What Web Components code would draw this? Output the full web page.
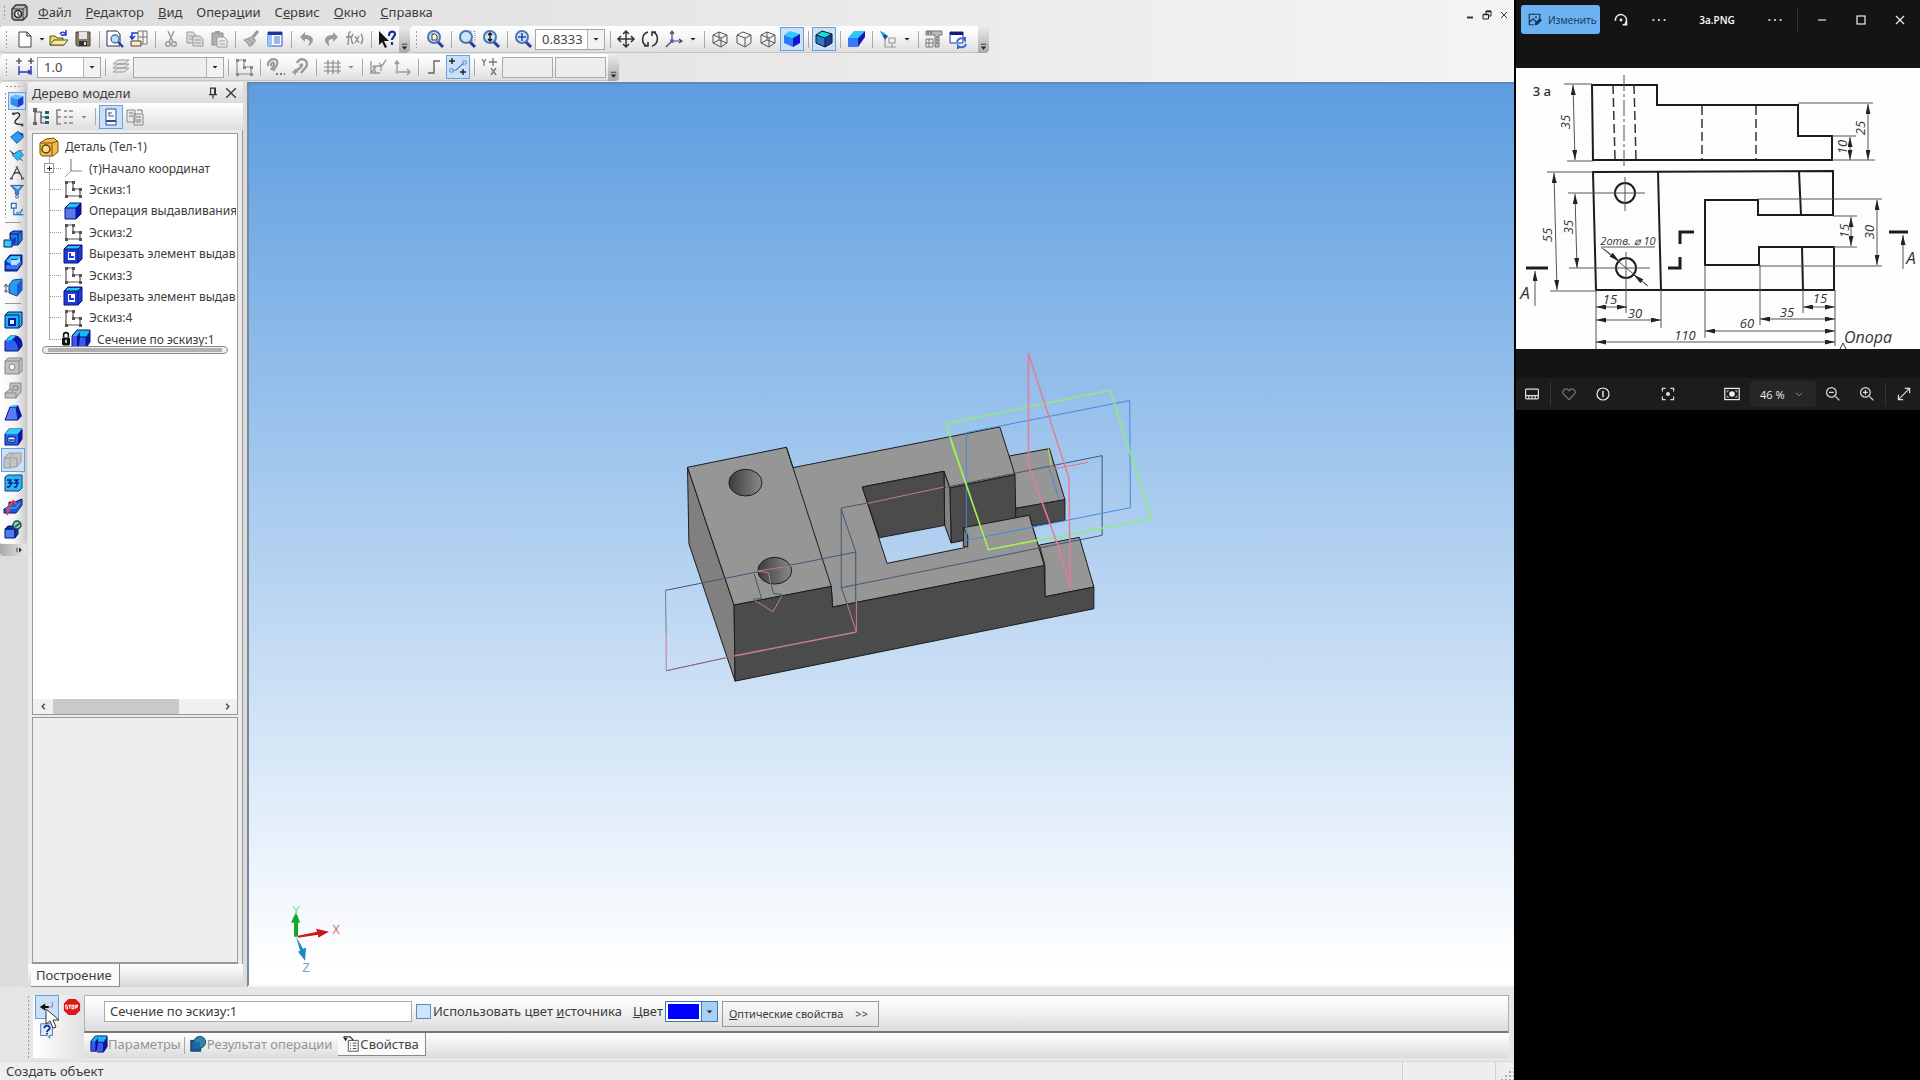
<!DOCTYPE html>
<html lang="ru">
<head>
<meta charset="utf-8">
<title>Деталь</title>
<style>
    html, body{
        height: 100%;
        margin: 0;
    }

    body{
        background: #000;
        font-family: "Noto Sans", "Open Sans", sans-serif;
        font-size: 13px;
        color: #3c3c3c;
        overflow: hidden;
    }
</style>
</head>
<body>

<desk-top>
    <cad-window slot="main"></cad-window>
    <photo-viewer slot="side"></photo-viewer>
</desk-top>

<script>
// every icon is drawn on a 20x20 grid
const cube = (f, t, s) => `<path d="M2 7h11v11H2z" fill="${f}"/><path d="M2 7l5-5h11l-5 5z" fill="${t}"/><path d="M13 7l5-5v11l-5 5z" fill="${s}"/><path d="M2 7l5-5h11v11l-5 5H2zM2 7h11v11M13 7l5-5" fill="none" stroke="#0a1470"/>`;
const wire = extra => `<path d="M3 6l6-3 8 3v8l-6 4-8-4zM3 6l8 3 6-3M11 9v9${extra}" fill="none" stroke="#555"/>`;
const lens = inner => `<path d="M12 12l6 6" stroke="#2a3c9c" stroke-width="3"/><circle cx="9" cy="8" r="6" fill="#cfe6fa" stroke="#4a74b8" stroke-width="2"/>${inner}`;
const sketch = c => `<path d="M3 3h7v7h7v7H3z" fill="none" stroke="${c}" stroke-width="1.2"/><path d="M2 2h3v3H2zM9 2h3v3H9zM9 9h3v3H9zM16 9h3v3h-3zM16 16h3v3h-3zM2 16h3v3H2z" fill="${c}"/>`;

const ICONS = {
    logo: `<path d="M3 7l4-4h9l2 2v9l-4 4H5l-2-2z" fill="#bbb" stroke="#333" stroke-width="1.4"/><path d="M3 7h11v11M14 7l4-3" fill="none" stroke="#333"/><circle cx="9" cy="12" r="3.5" fill="#eee" stroke="#222" stroke-width="1.6"/><path d="M9 10v3h2" fill="none" stroke="#222"/>`,
    doc: `<path d="M4 3h8l4 4v11H4z" fill="#fff" stroke="#444"/><path d="M12 3v4h4" fill="none" stroke="#222"/>`,
    open: `<path d="M1 16V7h5l2 2h6v7z" fill="#e8d860" stroke="#555522"/><path d="M1 16l4-5h14l-4 5z" fill="#f4ee9c" stroke="#555522"/><path d="M11 5c2-3 4-2 6 0M17 1v5h-5" fill="none" stroke="#1a2ad0" stroke-width="1.4"/>`,
    save: `<path d="M3 3h14v14H4l-1-1z" fill="#8a7a60" stroke="#444"/><path d="M6 3h8v7H6z" fill="#e4e4e4"/><path d="M6 12h8v5H6z" fill="#333"/><path d="M11 13h2v3h-2z" fill="#ddd"/>`,
    preview: `<path d="M2 2h10l3 3v12H2z" fill="#fff" stroke="#333"/><path d="M12 12l6 6" stroke="#2a3c9c" stroke-width="2.4"/><circle cx="10" cy="10" r="4" fill="#b8e0f8" stroke="#4474b8" stroke-width="1.4"/>`,
    manager: `<path d="M9 2h9v13H9z" fill="#f4f4f4" stroke="#777"/><path d="M9 8h9M14 2v13" stroke="#777"/><path d="M2 12h10v5H2z" fill="#ffe6c4" stroke="#444"/><path d="M9 4H3v5M1 7l2 3 3-3" fill="none" stroke="#2436d8" stroke-width="1.6"/>`,
    cut: `<path d="M7 2l5 11M13 2L8 13" stroke="#999" stroke-width="1.4"/><circle cx="7" cy="15" r="2.3" fill="none" stroke="#999" stroke-width="1.4"/><circle cx="13" cy="15" r="2.3" fill="none" stroke="#999" stroke-width="1.4"/>`,
    copy: `<path d="M2 3h6l3 3v8H2z" fill="#ddd" stroke="#999"/><path d="M8 7h7l3 3v7H8z" fill="#ddd" stroke="#999"/><path d="M4 7h4M4 10h4M10 11h6M10 14h6" stroke="#999"/>`,
    paste: `<path d="M3 4h11v12H3z" fill="#b0b0b0" stroke="#8a8a8a"/><path d="M6 2h5v3H6z" fill="#999"/><path d="M8 8h7l3 3v7H8z" fill="#eee" stroke="#999"/><path d="M10 12h6M10 15h6" stroke="#999"/>`,
    brush: `<path d="M17 2l-5 6" stroke="#999" stroke-width="3"/><path d="M2 11l9-4 4 4c-2 5-4 6-7 7-1-3-3-5-6-7z" fill="#a4a4a4"/><path d="M6 11l4 4M9 9l4 4" stroke="#ddd"/>`,
    props: `<path d="M3 3h14v14H3z" fill="#fff" stroke="#2b55b8"/><path d="M3 3h14v3H3z" fill="#1736a0"/><path d="M3 6h4v11H3z" fill="#9cc4f4"/><path d="M9 8h6M9 10h6M9 12h6M9 14h6" stroke="#3c6ad0"/>`,
    undo: `<path d="M8 3L3 8l5 5v-3c4 0 6 2 3 7 7-3 7-11-3-11z" fill="#9a9a9a"/>`,
    redo: `<path d="M12 3l5 5-5 5v-3c-4 0-6 2-3 7-7-3-7-11 3-11z" fill="#9a9a9a"/>`,
    fx: `<path d="M6 3c-3-1-2 3-3 13M1 8h5M8 5c-2 3-2 7 0 10M10 7l4 7M14 7l-4 7M16 5c2 3 2 7 0 10" fill="none" stroke="#8c8c8c" stroke-width="1.4"/>`,
    help: `<path d="M2 2v14l3-3 3 6 2-1-3-6h5z" fill="#111"/><path d="M12 7c0-6 6-5 6-2 0 3-3 3-3 6M15 13v3" fill="none" stroke="#20289c" stroke-width="2.2"/>`,
    zoomdoc: lens(`<path d="M7 5h3l2 2v4H7z" fill="#fff" stroke="#333"/>`),
    zoomarea: `<path d="M8 2h10v10H8z" fill="none" stroke="#888" stroke-dasharray="1 1"/>` + lens(''),
    zoomfit: lens(`<path d="M9 4v8M7 6l2-2 2 2M7 10l2 2 2-2" fill="none" stroke="#111" stroke-width="1.3"/>`),
    zoomin: lens(`<path d="M9 4v8M5 8h8" stroke="#2c4ca0" stroke-width="1.6"/>`),
    pan: `<path d="M10 2v16M2 10h16M7 5l3-3 3 3M7 15l3 3 3-3M5 7l-3 3 3 3M15 7l3 3-3 3" fill="none" stroke="#333" stroke-width="1.5"/>`,
    orbit: `<path d="M8 3c-7 2-7 12-1 14M12 17c7-2 7-12 1-14M4 17h4v-4M16 3h-4v4" fill="none" stroke="#333" stroke-width="1.6"/>`,
    axes: `<path d="M8 12V2M8 12h10M8 12l-6 6M6 5l2-3 2 3M15 10l3 2-3 2" fill="none" stroke="#445" stroke-width="1.2"/><circle cx="8" cy="12" r="2" fill="#5060d0"/>`,
    wire1: wire('M9 3v8M3 14l6-3 8 3'),
    wire2: wire(''),
    wire3: wire('M9 3v8M9 11l8 3M9 11l-6 3'),
    shaded: `<path d="M2 6l9 3v9l-9-4z" fill="#2c7cf4"/><path d="M2 6l6-4 10 3-7 4z" fill="#26ccfa"/><path d="M11 9l7-4v9l-7 4z" fill="#1414d0"/>`,
    shadededge: `<path d="M2 6l9 3v9l-9-4z" fill="#2c7cc4"/><path d="M2 6l6-4 10 3-7 4z" fill="#16dcd8"/><path d="M11 9l7-4v9l-7 4z" fill="#1c3ca0"/><path d="M2 6l6-4 10 3v9l-7 4-9-4zM2 6l9 3 7-4M11 9v9" fill="none" stroke="#112"/>`,
    persp: `<path d="M2 9h10v9H2z" fill="#3c78f4"/><path d="M2 9l6-7h11l-7 7z" fill="#28c8fa"/><path d="M12 9l7-7v6l-7 10z" fill="#1818b4"/>`,
    orient: `<path d="M2 2l8 5-3 4z" fill="#1c4ea0"/><path d="M2 2l5 2-2 3z" fill="#28b0e0"/><path d="M7 10v8h5M11 9h6v5h-6zM14 14v4M11 18h7" fill="none" stroke="#999" stroke-width="1.2"/>`,
    caliper: `<path d="M2 2h16v4h-3v12h-4V6H2z" fill="#bbb" stroke="#777"/><path d="M2 10h7v8H2zM2 14h7M5 10v8" fill="#eee" stroke="#777"/><path d="M4 2v3M7 2v3M12 8h2M12 11h2M12 14h2" stroke="#555"/>`,
    rebuild: `<path d="M2 3h13v11H2z" fill="#fff" stroke="#223388"/><path d="M2 3h13v3H2z" fill="#161a80"/><path d="M9 13c1-4 6-5 8-2v-3M18 15c-1 4-6 4-8 2v3" fill="none" stroke="#3468e4" stroke-width="2"/>`,
    dimstep: `<path d="M4 1v6M1 4h6M16 1v6M13 4h6" stroke="#333" stroke-width="1.2"/><path d="M4 9v9M16 9v9M4 15h12M13 13l3 2-3 2" fill="none" stroke="#2838c0" stroke-width="1.4"/>`,
    layers: `<path d="M2 15l5-4h11l-5 4zM2 11l5-4h11l-5 4zM2 7l5-4h11l-5 4z" fill="#e6e6e6" stroke="#999"/>`,
    sketchgrey: sketch('#8a8a8a'),
    sketch: sketch('#5a5252'),
    magnet1: `<path d="M2 9C1 0 14 0 11 8l-4 6M5 9c0-5 4-4 3-1l-3 5" fill="none" stroke="#999" stroke-width="2.2"/><path d="M10 17h2M14 17h2M18 17h1" stroke="#777" stroke-width="2"/>`,
    magnet2: `<path d="M7 6c3-7 13-3 9 4l-5 6M10 9c2-3 3-1 1 1l-5 4" fill="none" stroke="#999" stroke-width="2.4"/><path d="M5 12v6M2 15h6" stroke="#777"/>`,
    grid: `<path d="M6 3v14M11 3v14M16 3v14M2 6h17M2 10h17M2 14h17" stroke="#888" stroke-width="1.2"/>`,
    lcs1: `<path d="M3 4v12h9M5 9l3 7M5 9h8v5M11 6l3 3 4-6M3 16l5-6" fill="none" stroke="#999" stroke-width="1.4"/>`,
    lcs2: `<path d="M5 15V4M5 15h13M3 7l2-3 2 3M15 12l3 3-3 3" fill="none" stroke="#999" stroke-width="1.4"/><circle cx="5" cy="15" r="2" fill="#bbb"/>`,
    ortho: `<path d="M4 16h6V4h6" fill="none" stroke="#666" stroke-width="1.4"/>`,
    round: `<path d="M4 1v6M1 4h6M15 12v6M12 15h6" stroke="#222" stroke-width="1.4"/><path d="M3 14l5-1 8-7" fill="none" stroke="#4a86c8" stroke-width="1.2"/><path d="M2 12h3v3H2zM15 4h3v3h-3z" fill="#fff" stroke="#4a86c8"/>`,
    xy: `<path d="M2 2l2 3 2-3M4 5v4M13 1v8M9 5h8M11 11l5 7M16 11l-5 7" fill="none" stroke="#777" stroke-width="1.3"/>`,
    curve: `<path d="M6 4c7-4 10 1 4 6s-1 7 6 7" fill="none" stroke="#222" stroke-width="1.6"/><path d="M4 2h3v3H4zM15 16h3v3h-3z" fill="#444"/>`,
    surf: `<path d="M2 10l9-7 7 7-8 8z" fill="#2c9cf0" stroke="#123c9c"/><path d="M11 3l7 7V6z" fill="#1438b8"/>`,
    surf2: `<path d="M1 4l4 5 12 8M17 4L5 9" stroke="#333"/><path d="M4 10l9-6 5 6-7 7z" fill="#2cbcf4" stroke="#1a58b0"/>`,
    compass: `<path d="M10 3L3 17M10 3l7 14M5 12c3-3 7-3 10 0" fill="none" stroke="#333" stroke-width="1.3"/><circle cx="10" cy="3" r="1.6" fill="#777"/><path d="M1 16h4v2H1zM15 16h4v2h-4z" fill="#555"/>`,
    filter: `<path d="M2 3h16l-6 7v4H8v-4z" fill="#3c88dc" stroke="#1c4a94"/><path d="M5 4h10l-4 4z" fill="#a8d8fa"/><circle cx="10" cy="17" r="1.800" fill="none" stroke="#1c4a94"/>`,
    spec: `<path d="M3 3h6v6H3zM6 9v8h12M9 14l4 3 4-7" fill="none" stroke="#2c6cb8" stroke-width="1.5"/><path d="M10 16l3-4 2 4z" fill="#54c0f0"/>`,
    partcube: `<path d="M2 5l9 3v10l-9-4z" fill="#3488f4"/><path d="M2 5l6-3 10 2-7 4z" fill="#58c0fa"/><path d="M11 8l7-4v10l-7 4z" fill="#1c40c8"/>`,
    extrude: cube('#5878f0', '#18c8f8', '#0c14c0'),
    cutbox: `<path d="M1 5l4-4h14v14l-4 4H1z" fill="#1c3cd8" stroke="#0a1470"/><path d="M2 5l3-3h13l-3 3z" fill="#28c4f8"/><path d="M1 5h14v14M15 5l4-4" fill="none" stroke="#0a1470"/><path d="M5 8h7v8H5z" fill="#fff"/><path d="M6 14V9h2v3h3v2z" fill="#1c3cd8"/>`,
    section: `<path d="M1 6l5-5h13v12l-5 6H9V8H1z" fill="#18b8f4"/><path d="M1 7h6v11H1zM8 8h7v11H8z" fill="#3858f0"/><path d="M15 8l4-6v11l-4 6zM6 7l3-4v5l-1 9-2 1z" fill="#0c14a8"/><path d="M1 7l5-6h13v12l-4 6H8M1 7v11h7M7 7v10M8 8h7v11" fill="none" stroke="#0a1470"/>`,
    part: `<path d="M1 6l6-4 8-1 4 4v10l-5 4H3l-2-2z" fill="#f4bc48" stroke="#7a5010"/><path d="M1 6h12v13M13 6l6-2" fill="none" stroke="#7a5010"/><circle cx="7" cy="12" r="4" fill="#fadc8c" stroke="#5c3c0c" stroke-width="1.4"/>`,
    origin: `<path d="M8 1v12h11" fill="none" stroke="#8a8494" stroke-width="1.2"/><path d="M8 13l-6 6" stroke="#c89090"/>`,
    lock: `<path d="M7 8V5c0-4 6-4 6 0v3" fill="none" stroke="#111" stroke-width="2"/><rect x="5" y="8" width="10" height="10" rx="2" fill="#111"/><path d="M10 11v4" stroke="#eee" stroke-width="2"/>`,
    b1: `<path d="M7 4l3-2h9v9l-4 5h-5v-6H7z" fill="#1c7ce4" stroke="#0a1470"/><path d="M7 5h8v10M15 5l4-3" fill="none" stroke="#0a1470"/><path d="M1 11h8v7H1z" fill="#3cc8f4" stroke="#0a1470"/><path d="M9 11l4-3v5l-4 5z" fill="#1838c0"/>`,
    b2: `<path d="M2 8l5-6h12v9l-5 7H2z" fill="#1438c8" stroke="#0a1470"/><path d="M3 8l5-5h10l-3 3H8v5z" fill="#30c0f8"/><path d="M8 7h6l3-3v5l-3 3H8z" fill="#b8e0fa"/><path d="M8 12h6l4-4v3l-4 5H3v-4z" fill="#2c78ec"/>`,
    b3: `<path d="M6 8l4-5 9-1v11l-5 6-8-3z" fill="#2898f0" stroke="#184890"/><path d="M14 8l5-6v11l-5 6z" fill="#1c5cd0"/><path d="M3 7v9M1 10l2-3 2 3M1 14h4" fill="none" stroke="#555"/>`,
    b4: `<path d="M2 5l3-3h14v13l-3 3H2z" fill="#18b8f4" stroke="#0a1470"/><path d="M2 5h14v13" fill="none" stroke="#0a1470"/><path d="M6 9h6v6H6z" fill="#dff4ff" stroke="#0c18a8" stroke-width="2"/>`,
    b5: `<path d="M2 18V8l5-5h6c4 1 6 4 6 10l-4 5z" fill="#2c64ec" stroke="#0a1470"/><path d="M2 8l5-5h6l-4 4z" fill="#30c8f8"/><path d="M9 7c4 1 6 5 6 11l4-5C19 7 17 4 13 3z" fill="#0c18a8"/>`,
    b6: `<path d="M2 5l3-3h14v13l-3 3H2z" fill="#c0c0c0" stroke="#888"/><path d="M2 5h14v13M16 5l3-3" fill="none" stroke="#888"/><circle cx="9" cy="11" r="3" fill="#f4f4f4" stroke="#888"/>`,
    b7: `<path d="M2 13l5-4V3h11v9l-5 6H2z" fill="#c0c0c0" stroke="#888"/><path d="M2 13h11v5M7 9l3 3M10 6h5v4h-5z" fill="none" stroke="#888"/>`,
    b8: `<path d="M2 17L7 4h6l2 13z" fill="#5480f4" stroke="#0a1470"/><path d="M7 4l3-2h5l-2 2z" fill="#30c8f8"/><path d="M13 4l2-2 4 11-4 4z" fill="#0c18a8"/>`,
    b9: `<path d="M2 7l4-5h13v10l-4 6H2z" fill="#2468ec" stroke="#0a1470"/><path d="M2 7l4-5h13l-4 5z" fill="#30d0f8"/><path d="M15 7l4-5v10l-4 6z" fill="#0c18a8"/><path d="M5 10h7v5H5z" fill="#fff" stroke="#0a1470"/><path d="M6 13h5" stroke="#2468ec" stroke-width="2"/>`,
    b10: `<path d="M1 8l5-5h12v9l-5 5H8v1H1z" fill="#c4c4c4" stroke="#999"/><path d="M1 8h6v10M9 8h5v9M7 8l3-4" fill="none" stroke="#999"/>`,
    b11: `<path d="M2 4l3-2h14v13l-3 3H2z" fill="#28b8f0" stroke="#0c3c90"/><path d="M4 7h4l-2 3h3l-3 4H4M11 7h4l-3 3h3l-2 4h-2" fill="none" stroke="#0c1890" stroke-width="1.4"/>`,
    b12: `<path d="M1 12l5-3V5h6l7-3v6l-6 8H1z" fill="#1c58e0" stroke="#0a1470"/><path d="M2 11h11l4-5" fill="none" stroke="#40c8f8"/><path d="M4 14l6-10M10 3l4 5M4 18l4-12" stroke="#f04444" stroke-width="1.800"/>`,
    b13: `<path d="M2 9h10v9H2z" fill="#4480f4" stroke="#0a1470"/><path d="M2 9l3-3h10v8l-3 4V9z" fill="#1830b8" stroke="#0a1470"/><circle cx="14" cy="5" r="4" fill="#8cc8b8" stroke="#1c4c48" stroke-width="1.4"/><path d="M12 7l5-4" stroke="#1c4c48" stroke-width="1.4"/>`,
    tree: `<path d="M4 2v15M4 5h7M10 5v11h5M10 10h5" fill="none" stroke="#445" stroke-width="1.2"/><path d="M2 1h4v4H2zM2 15h4v3H2z" fill="#666"/><path d="M14 4h4v3h-4zM14 9h4v3h-4zM14 14h4v3h-4z" fill="#1c6474"/>`,
    treelist: `<path d="M6 3H2v14h4M2 10h4M9 4h3M14 4h4M9 10h3M14 10h4M9 16h3M14 16h4" fill="none" stroke="#888" stroke-width="1.6"/>`,
    treepage: `<path d="M5 2h10v16H5z" fill="#f8fcff" stroke="#334c90"/><path d="M5 14h10" stroke="#334c90" stroke-width="2"/><path d="M8 5v4h5M8 6h3" fill="none" stroke="#557"/>`,
    treedoc: `<path d="M2 3h8v12H2zM9 7h9v11H9z" fill="#e8e8e8" stroke="#888"/><path d="M4 6h4M4 9h4M11 10h5M11 13h5M11 15h5M12 3h5v3" fill="none" stroke="#777"/>`,
    enter: `<path d="M2 10l6-4v3h4v2H8v3z" fill="#111"/><path d="M12 10h4V4" fill="none" stroke="#789"/>`,
    stop: `<path d="M6 1h8l5 5v8l-5 5H6l-5-5V6z" fill="#dc1818"/><path d="M5 8H3v2h2v2H3M6 8h3M7.500 8v4M10 8h2v4h-2zM14 12V8h2v2h-2" fill="none" stroke="#fff" stroke-width="1.200"/>`,
    hint: `<path d="M3 2h13v13h-3v3l-3-3H3z" fill="#d8ecfc" stroke="#4468b0"/><path d="M7 7c0-4 6-4 6 0 0 2-3 2-3 4M10 12v2" fill="none" stroke="#1c2c90" stroke-width="2"/>`,
    body: `<path d="M2 6h11v12H2z" fill="#185c98" stroke="#0c3058"/><circle cx="12" cy="8" r="6.500" fill="#3484b0" stroke="#184868"/><path d="M5 8h7v7H5z" fill="#1868a8"/>`,
    form: `<path d="M2 2h7l3 3v4" fill="none" stroke="#334" stroke-width="1.400"/><path d="M1 2l3 5 2-3z" fill="#223"/><path d="M7 6h11v12H7z" fill="#fff" stroke="#444"/><path d="M9 9h1M12 9h4M9 12h1M12 12h4M9 15h1M12 15h4" stroke="#333"/>`,
    pin: `<path d="M7 4h6v8H7zM5 12h10M10 12v5M12 4v8" fill="none" stroke="#333" stroke-width="1.500"/>`,
    close: `<path d="M4 4l12 12M16 4L4 16" stroke="currentColor" stroke-width="1.800"/>`,
    min: `<path d="M4 15h12" stroke="#333" stroke-width="4"/>`,
    restore: `<path d="M2 9h11v9H2zM8 8V2h10v10h-4" fill="none" stroke="#222" stroke-width="2"/><path d="M2 9h11M8 3h10" stroke="#222" stroke-width="3"/>`,
    left: `<path d="M13 4l-6 6 6 6" fill="none" stroke="#444" stroke-width="3"/>`,
    right: `<path d="M7 4l6 6-6 6" fill="none" stroke="#444" stroke-width="3"/>`,
    flyout: `<path d="M5 4v12" stroke="#222" stroke-width="2"/><path d="M10 4l7 6-7 6z" fill="#222"/>`,
    edit: `<path d="M17 9V3H3v14h6M3 14l5-5 4 4" fill="none" stroke="#173250" stroke-width="1.500"/><path d="M10 18l1-4 6-6 3 3-6 6z" fill="#173250"/><circle cx="12" cy="7" r="1.300" fill="#173250"/>`,
    rotate: `<path d="M3 11a7 7 0 1 1 12 4M17 11v5h-5" fill="none" stroke="#eee" stroke-width="1.800"/><circle cx="10" cy="10" r="1.800" fill="#eee"/>`,
    dots: `<circle cx="3" cy="10" r="1.400" fill="#ddd"/><circle cx="10" cy="10" r="1.400" fill="#ddd"/><circle cx="17" cy="10" r="1.400" fill="#ddd"/>`,
    wmin: `<path d="M5 10h10" stroke="#ddd" stroke-width="1.500"/>`,
    wmax: `<rect x="5" y="5" width="10" height="10" fill="none" stroke="#eee" stroke-width="1.500"/>`,
    wclose: `<path d="M5 5l10 10M15 5L5 15" stroke="#eee" stroke-width="1.500"/>`,
    film: `<rect x="2" y="4" width="16" height="12" rx="1" fill="none" stroke="#ddd" stroke-width="1.500"/><path d="M2 12h16M6 12v4M10 12v4M14 12v4" stroke="#ddd" stroke-width="1.500"/>`,
    heart: `<path d="M10 17L3 10c-3-5 4-9 7-4 3-5 10-1 7 4z" fill="none" stroke="#777" stroke-width="1.500"/>`,
    info: `<circle cx="10" cy="10" r="7.500" fill="none" stroke="#eee" stroke-width="1.500"/><path d="M10 6v8" stroke="#eee" stroke-width="1.800"/>`,
    scan: `<path d="M3 7V3h4M13 3h4v4M17 13v4h-4M7 17H3v-4" fill="none" stroke="#ddd" stroke-width="1.500"/><circle cx="10" cy="10" r="2.500" fill="#ddd"/>`,
    fit: `<rect x="1" y="3" width="18" height="14" fill="none" stroke="#eee" stroke-width="1.500"/><circle cx="10" cy="10" r="3.500" fill="#eee"/><path d="M4 8V6h2M14 6h2v2M16 12v2h-2M6 14H4v-2" fill="none" stroke="#eee"/>`,
    chevron: `<path d="M5 8l5 5 5-5" fill="none" stroke="#999" stroke-width="1.500"/>`,
    minus: `<circle cx="8" cy="8" r="6" fill="none" stroke="#ddd" stroke-width="1.500"/><path d="M5 8h6M13 13l5 5" stroke="#ddd" stroke-width="1.500"/>`,
    plus: `<circle cx="8" cy="8" r="6" fill="none" stroke="#ddd" stroke-width="1.500"/><path d="M5 8h6M8 5v6M13 13l5 5" stroke="#ddd" stroke-width="1.500"/>`,
    expand: `<path d="M3 17L17 3M11 3h6v6M3 11v6h6" fill="none" stroke="#ddd" stroke-width="1.500"/>`,
    drop: `<path d="M5 8h10l-5 5z" fill="#222"/>`,
    dropgrey: `<path d="M5 8h10l-5 5z" fill="#888"/>`,
    more: `<path d="M4 5h12" stroke="#333" stroke-width="2"/><path d="M4 10h12l-6 7z" fill="#222"/>`
};

// registers an element whose shadow root is cloned from one template
function define(name, html, setup){
    const template = document.createElement('template');
    template.innerHTML = html;
    customElements.define(name, class extends HTMLElement{
        constructor(){
            super();
            this.attachShadow({mode: 'open'});
            this.shadowRoot.appendChild(template.content.cloneNode(true));
        }
        connectedCallback(){
            if(setup) setup(this, this.shadowRoot);
        }
    });
}

define('ui-icon', `
    <style>
    :host{
        display: inline-block;
        flex: none;
        width: var(--icon, 20px);
        height: var(--icon, 20px);
    }
    svg{
        display: block;
        width: 100%;
        height: 100%;
    }
    </style>
    <svg viewBox="0 0 20 20" aria-hidden="true"></svg>
`, (host, root) => {
    root.querySelector('svg').innerHTML = ICONS[host.getAttribute('name')];
});

define('tool-button', `
    <style>
    :host{
        display: flex;
        flex: none;
        width: 24px;
        height: 24px;
    }
    :host([size="narrow"]){ width: 10px; --icon: 10px; }
    :host([size="wide"]){ width: 14px; --icon: 10px; }
    :host([size="small"]){ width: 18px; height: 18px; --icon: 16px; }
    button{
        display: flex;
        align-items: center;
        justify-content: center;
        flex: 1;
        min-width: 0;
        padding: 0;
        border: 1px solid transparent;
        background: none;
        color: inherit;
    }
    :host([pressed]) button{
        background: #c9e0f7;
        border-color: #6c9fd8;
    }
    </style>
    <button type="button"></button>
`, (host, root) => {
    const button = root.querySelector('button');
    const icon = host.getAttribute('icon');
    button.innerHTML = `<ui-icon name="${icon}"></ui-icon>`;
    button.setAttribute('aria-label', host.getAttribute('label') || icon);
});

define('tool-sep', `
    <style>
    :host{
        display: flex;
        flex: none;
        width: 8px;
        height: 17px;
        justify-content: center;
    }
    i{ border-left: 1px solid #a8a8a8; }
    </style>
    <i></i>
`);

define('tool-combo', `
    <style>
    :host{
        display: flex;
        flex: none;
        box-sizing: border-box;
        height: 21px;
        border: 1px solid #a6a6a6;
        background: #fff;
    }
    :host([off]){ background: #eee; }
    select{
        appearance: none;
        flex: 1;
        min-width: 0;
        border: 0;
        margin: 0;
        padding: 0 0 0 6px;
        background: none;
        font: inherit;
        color: #444;
        opacity: 1;
    }
    span{
        display: flex;
        align-items: center;
        border-left: 1px solid #b4b4b4;
        background: #f2f2f2;
        padding: 0 3px;
        --icon: 10px;
    }
    </style>
    <select><option></option></select><span><ui-icon name="drop"></ui-icon></span>
`, (host, root) => {
    const select = root.querySelector('select');
    select.options[0].textContent = host.getAttribute('value') || '';
    select.setAttribute('aria-label', host.getAttribute('label'));
    select.disabled = host.hasAttribute('off');
});

define('tool-bar', `
    <style>
    :host{
        display: flex;
        flex: none;
        height: 27px;
    }
    .items{
        display: flex;
        align-items: center;
        padding-left: 5px;
        border-radius: 4px 0 0 4px;
        background: linear-gradient(#fff, #f6f6f6 40%, #dedede);
        border-bottom: 1px solid #c4c4c4;
    }
    .grip{
        width: 8px;
        height: 18px;
        background: radial-gradient(circle, #999 1px, transparent 1px) 0 0 / 3px 4px repeat-y;
    }
    .more{
        display: flex;
        align-items: flex-end;
        width: 11px;
        padding: 0 0 2px 1px;
        border: 0;
        border-radius: 0 4px 4px 0;
        background: linear-gradient(#ececec, #a8a8a8);
        --icon: 9px;
    }
    </style>
    <div class="items"><span class="grip"></span><slot></slot></div>
    <button class="more" type="button" aria-label="Настройка панели"><ui-icon name="more"></ui-icon></button>
`);

define('menu-bar', `
    <style>
    :host{
        display: flex;
        flex: none;
        align-items: center;
        box-sizing: border-box;
        height: 26px;
        padding: 0 2px 2px 3px;
    }
    .grip{
        width: 6px;
        height: 14px;
        background: radial-gradient(circle, #999 1px, transparent 1px) 0 0 / 3px 4px repeat-y;
    }
    nav{
        display: flex;
        flex: 1;
        gap: 14px;
        padding-left: 9px;
    }
    nav button{
        padding: 0;
        border: 0;
        background: none;
        font: inherit;
        color: inherit;
    }
    .win{
        display: flex;
        padding-top: 6px;
        --icon: 10px;
        color: #222;
    }
    .win tool-button{ width: 17px; }
    </style>
    <span class="grip"></span><ui-icon name="logo"></ui-icon>
    <nav>
        <button type="button"><u>Ф</u>айл</button>
        <button type="button"><u>Р</u>едактор</button>
        <button type="button"><u>В</u>ид</button>
        <button type="button">Опера<u>ц</u>ии</button>
        <button type="button">С<u>е</u>рвис</button>
        <button type="button"><u>О</u>кно</button>
        <button type="button"><u>С</u>правка</button>
    </nav>
    <div class="win">
        <tool-button icon="min" label="Свернуть"></tool-button>
        <tool-button icon="restore" label="Восстановить"></tool-button>
        <tool-button icon="close" label="Закрыть"></tool-button>
    </div>
`);

define('side-bar', `
    <style>
    :host{
        display: flex;
        flex-direction: column;
        flex: none;
        width: 28px;
    }
    .strip{
        box-sizing: border-box;
        width: 27px;
        padding: 3px 0 2px;
        background: linear-gradient(90deg, #fff, #f4f4f4 55%, #c8c8c8);
        border-radius: 4px;
    }
    .top{
        height: 7px;
        margin: 0 5px;
        background: radial-gradient(circle, #999 1px, transparent 1px) 0 0 / 4px 3px repeat-x;
    }
    .modes{
        padding-left: 8px;
        background: radial-gradient(circle, #999 1px, transparent 1px) 4px 0 / 3px 4px repeat-y;
    }
    .group{
        display: grid;
        grid-auto-rows: 1fr;
        padding-left: 1px;
    }
    .group tool-button{
        height: auto;
        min-height: 0;
    }
    .a{ height: 72px; }
    .b{ height: 234px; }
    hr{
        width: 16px;
        margin: 4px 5px;
        border: 0;
        border-top: 1px solid #999;
    }
    .end{
        display: flex;
        align-items: center;
        justify-content: flex-end;
        width: 26px;
        height: 12px;
        padding: 0 3px;
        border: 0;
        border-radius: 0 0 4px 4px;
        background: linear-gradient(90deg, #a8a8a8, #e8e8e8);
        --icon: 8px;
    }
    </style>
    <div class="strip">
        <div class="top"></div>
        <div class="modes">
            <tool-button size="small" icon="partcube" pressed></tool-button>
            <tool-button size="small" icon="curve"></tool-button>
            <tool-button size="small" icon="surf"></tool-button>
            <tool-button size="small" icon="surf2"></tool-button>
            <tool-button size="small" icon="compass"></tool-button>
            <tool-button size="small" icon="filter"></tool-button>
            <tool-button size="small" icon="spec"></tool-button>
        </div>
        <hr>
        <div class="group a">
            <tool-button icon="b1"></tool-button>
            <tool-button icon="b2"></tool-button>
            <tool-button icon="b3"></tool-button>
        </div>
        <hr>
        <div class="group b">
            <tool-button icon="b4"></tool-button>
            <tool-button icon="b5"></tool-button>
            <tool-button icon="b6"></tool-button>
            <tool-button icon="b7"></tool-button>
            <tool-button icon="b8"></tool-button>
            <tool-button icon="b9"></tool-button>
            <tool-button icon="b10" pressed></tool-button>
            <tool-button icon="b11"></tool-button>
            <tool-button icon="b12"></tool-button>
            <tool-button icon="b13"></tool-button>
        </div>
    </div>
    <button class="end" type="button" aria-label="Развернуть панель"><ui-icon name="flyout"></ui-icon></button>
`);

define('tree-node', `
    <style>
    :host{
        display: flex;
        align-items: center;
        gap: 6px;
        padding-left: 10px;
        white-space: nowrap;
    }
    :host([root]){ padding-left: 0; }
    .line{
        flex: none;
        width: 12px;
        margin-right: -4px;
        border-top: 1px dotted #999;
    }
    :host([root]) .line{ display: none; }
    .text{
        flex: 1;
        min-width: 0;
        overflow: hidden;
    }
    </style>
    <span class="line"></span><slot name="mark"></slot><span class="text"><slot></slot></span>
`, (host, root) => {
    root.querySelector('.text').insertAdjacentHTML('beforebegin', `<ui-icon name="${host.getAttribute('icon')}"></ui-icon>`);
});

define('model-tree', `
    <style>
    :host{
        display: flex;
        flex-direction: column;
        flex: none;
        box-sizing: border-box;
        width: 219px;
        background: #eaeaea;
        border-right: 4px solid #dcdcdc;
        box-shadow: inset -1px 0 #999;
    }
    header{
        display: flex;
        align-items: center;
        flex: none;
        height: 21px;
        padding: 0 3px 0 4px;
        background: linear-gradient(#f2f2f2, #dcdcdc);
    }
    header span{ flex: 1; }
    .bar{
        display: flex;
        align-items: center;
        flex: none;
        height: 27px;
        padding-left: 1px;
        background: linear-gradient(#fff, #dedede);
    }
    .box{
        display: flex;
        flex-direction: column;
        flex: none;
        box-sizing: border-box;
        height: 582px;
        margin: 3px 5px 2px 4px;
        border: 1px solid #999;
        background: #fff;
    }
    .rows{
        display: grid;
        grid-template-columns: minmax(0, 1fr);
        grid-auto-rows: 1fr;
        flex: none;
        height: 214px;
        padding: 2px 1px 0 6px;
        font-size: 12px;
        background: linear-gradient(#aaa, #aaa) 16px 22px / 1px 184px no-repeat;
    }
    .plus{
        box-sizing: border-box;
        flex: none;
        width: 10px;
        height: 10px;
        margin: 0 3px 0 -19px;
        border: 1px solid #999;
        background: linear-gradient(#333, #333) center / 5px 1px no-repeat, linear-gradient(#333, #333) center / 1px 5px no-repeat, #fff;
    }
    .lock{
        margin: 0 -9px 0 -5px;
        --icon: 16px;
    }
    .stop{
        flex: none;
        height: 4px;
        margin: -3px 10px 0;
        border: 1px solid #eee;
        border-width: 1px 5px;
        outline: 1px solid #888;
        border-radius: 4px;
        background: #b0b0b0;
    }
    .scroll{
        display: flex;
        align-items: center;
        height: 15px;
        margin-top: auto;
        background: #f0f0f0;
        --icon: 9px;
    }
    .scroll button{
        display: flex;
        justify-content: center;
        width: 20px;
        padding: 0;
        border: 0;
        background: none;
    }
    .track{
        flex: 1;
        height: 15px;
    }
    .track i{
        display: block;
        width: 77%;
        height: 15px;
        background: #c9c9c9;
    }
    .info{
        flex: 1;
        margin: 0 5px 0 4px;
        border: 1px solid #999;
        border-bottom: 2px solid #999;
        background: #eee;
    }
    .tabs{
        flex: none;
        height: 23px;
        padding-left: 3px;
        background: linear-gradient(#fff, #d8d8d8);
    }
    .tabs button{
        height: 23px;
        padding: 0 7px 0 5px;
        border: solid #888;
        border-width: 0 1px 1px 0;
        background: #fafafa;
        font: inherit;
        color: inherit;
    }
    </style>
    <header><span>Дерево модели</span>
        <tool-button size="small" icon="pin" label="Закрепить"></tool-button>
        <tool-button size="small" icon="close" label="Закрыть"></tool-button>
    </header>
    <div class="bar">
        <tool-button icon="tree"></tool-button><tool-button icon="treelist"></tool-button>
        <tool-button size="wide" icon="dropgrey"></tool-button><tool-sep></tool-sep>
        <tool-button icon="treepage" pressed></tool-button><tool-button icon="treedoc"></tool-button>
    </div>
    <div class="box">
        <div class="rows">
            <tree-node root icon="part">Деталь (Тел-1)</tree-node>
            <tree-node icon="origin"><i class="plus" slot="mark"></i>(т)Начало координат</tree-node>
            <tree-node icon="sketch">Эскиз:1</tree-node>
            <tree-node icon="extrude">Операция выдавливания</tree-node>
            <tree-node icon="sketch">Эскиз:2</tree-node>
            <tree-node icon="cutbox">Вырезать элемент выдав.</tree-node>
            <tree-node icon="sketch">Эскиз:3</tree-node>
            <tree-node icon="cutbox">Вырезать элемент выдав.</tree-node>
            <tree-node icon="sketch">Эскиз:4</tree-node>
            <tree-node icon="section"><ui-icon class="lock" slot="mark" name="lock"></ui-icon>Сечение по эскизу:1</tree-node>
        </div>
        <div class="stop"></div>
        <div class="scroll">
            <button type="button" aria-label="Влево"><ui-icon name="left"></ui-icon></button>
            <div class="track"><i></i></div>
            <button type="button" aria-label="Вправо"><ui-icon name="right"></ui-icon></button>
        </div>
    </div>
    <div class="info"></div>
    <div class="tabs"><button type="button">Построение</button></div>
`);

define('model-view', `
    <style>
    :host{
        display: block;
        flex: 1;
        min-width: 0;
        border-top: 2px solid #6089b4;
        border-left: 2px solid #77899c;
        border-bottom: 2px solid #f4f4f4;
        background: linear-gradient(#5c9de0, #fff 98%);
    }
    .scene{
        display: block;
        width: 100%;
        height: 100%;
    }
    .model *{ vector-effect: non-scaling-stroke; }
    </style>
    <svg class="scene" viewBox="0 0 1264 900" fill="none">
        <defs>
            <linearGradient id="hole"><stop stop-color="#3c3c3c"/><stop offset="1" stop-color="#8a8a8a"/></linearGradient>
        </defs>
        <svg class="model" x="391" y="256" width="540" height="360" viewBox="0 0 1568 1080" preserveAspectRatio="none">
            <g stroke="#1c1c1c" stroke-width="1" stroke-linejoin="round">
                <path fill="#808080" d="M137 381L272 794L275 1022L141 610Z"/>
                <path fill="#969696" d="M1071 347L1187 325L1232 478L1089 504Z"/>
                <path fill="#4b4b4b" d="M1089 504L1232 478V540L1089 566Z"/>
                <path fill="#969696" fill-rule="evenodd" d="M137 381L424 321L443 382L1043 260L1087 403L898 443L881 393L644 440L716 669L950 620L938 562L1128 525L1172 675L558 800L554 738L272 794Z"/>
                <path fill="#4b4b4b" d="M898 443L1087 403L1089 504V566L940 600L902 608Z"/>
                <path fill="#828282" d="M881 393L898 443L902 608L883 555Z"/>
                <path fill="#4b4b4b" d="M644 440L881 393L883 555L694 592Z"/>
                <path fill="#969696" d="M938 562L1128 525L1172 675L950 720Z" stroke="none"/>
                <path d="M938 562L1128 525L1172 675"/>
                <path fill="#777" d="M938 562L950 585V620L937 618Z"/>
                <path fill="#969696" d="M1158 614L1274 591L1316 740L1174 769V675Z"/>
                <path fill="#4b4b4b" d="M272 794L554 738L558 800L1172 675L1174 769L1316 740V805L275 1022Z"/>
                <path d="M424 321L554 738"/>
                <ellipse cx="305" cy="427" rx="48" ry="40" fill="url(#hole)"/>
                <ellipse cx="390" cy="691" rx="49" ry="40" fill="url(#hole)"/>
            </g>
            <g stroke="#3f5872">
                <path d="M73 750L625 635V790M583 503L660 488M583 503V742L1340 585V346L885 441M583 507L625 635M583 742L602 795"/>
                <path d="M330 700L352 775L328 776M372 700L387 760L410 762V772"/>
            </g>
            <path stroke="#70808f" d="M73 750L75 880"/>
            <g stroke="#c47d8e">
                <path d="M75 880V991L275 946M600 790L627 875V780M340 692L440 676M660 489L881 440M332 780L385 814L410 768M340 692L372 697L378 730"/>
                <path d="M275 946L627 875" stroke-width="1.5"/>
                <path stroke="#8c6880" d="M75 991L275 946"/>
            </g>
            <path stroke="#428adf" d="M946 277L1420 181L1422 502L946 600ZM1187 385L1215 478"/>
            <path stroke="#8eed78" stroke-width="1.5" d="M886 250L1363 150L1484 535L1010 628Z"/>
            <path stroke="#a8f838" d="M900 300L1010 628L1155 598M1184 325L1192 378"/>
            <path stroke="#e57b96" stroke-width="1.5" d="M1126 40V375L1210 610L1247 740L1244 415Z"/>
            <path stroke="#ee7078" d="M1190 388L1300 366"/>
        </svg>
        <g>
            <path fill="#c81818" d="M49 851l19-4-1-3 13 3-11 6v-3l-20 3z"/>
            <path fill="#14a828" d="M45 852V838h-3l5-11 4 11h-2v14z"/>
            <path fill="#1c88c8" d="M47 852l7 12 3-1-1 13-7-9 2-1z"/>
        </g>
        <g font-family="Liberation Mono, monospace" font-size="13" text-anchor="middle">
            <text x="87" y="849" fill="#d87878">X</text>
            <text x="47" y="830" fill="#8cd89c">Y</text>
            <text x="57" y="887" fill="#78a0dc">Z</text>
        </g>
    </svg>
`);

define('property-panel', `
    <style>
    :host{
        display: flex;
        flex: none;
        padding: 8px 5px 3px 27px;
        background: #e6e6e6;
    }
    .grip{
        width: 6px;
        background: radial-gradient(circle, #999 1px, transparent 1px) 0 0 / 3px 4px repeat-y;
    }
    .acts{
        display: grid;
        grid-template-columns: 25px 23px;
        grid-auto-rows: 24px;
        position: relative;
        box-sizing: border-box;
        width: 51px;
        padding-left: 2px;
        background: linear-gradient(90deg, #fff, #e2e2e2);
        --icon: 18px;
    }
    /* mouse pointer, lies over the first button */
    .acts svg{
        position: absolute;
        left: 12px;
        top: 13px;
        width: 15px;
        height: 21px;
    }
    .main{
        flex: 1;
        min-width: 0;
    }
    .form{
        display: flex;
        align-items: center;
        box-sizing: border-box;
        height: 38px;
        padding: 0 0 4px 19px;
        border: 1px solid #b0b0b0;
        border-bottom: 2px solid #777;
        background: linear-gradient(#fff, #f4f4f4 40%, #dcdcdc);
    }
    .name{
        box-sizing: border-box;
        width: 308px;
        height: 21px;
        padding: 0 5px;
        border: 1px solid #aaa;
        font: inherit;
        color: inherit;
    }
    .check{
        appearance: none;
        width: 15px;
        height: 15px;
        margin: 0 2px 0 4px;
        border: 1px solid #5c8cc0;
        background: #cfe4f8;
    }
    .color{
        margin-left: 11px;
    }
    .pick{
        display: flex;
        align-items: center;
        width: 53px;
        height: 21px;
        margin: 0 4px 0 2px;
        padding: 0;
        border: 1px solid #3c78c0;
        background: #fff;
        --icon: 11px;
    }
    .pick i{
        flex: 1;
        height: 15px;
        margin: 0 2px;
        background: #00f;
    }
    .pick span{
        display: flex;
        align-items: center;
        align-self: stretch;
        padding: 0 2px;
        border-left: 1px solid #3c78c0;
        background: #a8d0f4;
    }
    .optic{
        display: flex;
        align-items: center;
        align-self: flex-start;
        gap: 12px;
        box-sizing: border-box;
        height: 26px;
        margin-top: 5px;
        padding: 0 10px 0 6px;
        border: 1px solid #999;
        background: linear-gradient(#fafafa, #e2e2e2);
        font: inherit;
        font-size: 11px;
        color: inherit;
    }
    .tabs{
        display: flex;
        align-items: flex-start;
        height: 25px;
        padding-left: 6px;
        background: linear-gradient(#fff, #dcdcdc);
        --icon: 18px;
    }
    .tabs button{
        display: flex;
        align-items: center;
        height: 23px;
        padding: 0;
        border: 0;
        background: none;
        font: inherit;
        color: #959595;
    }
    .tabs tool-sep{ margin-top: 4px; }
    .tabs .on{
        margin-left: 6px;
        padding: 0 6px 0 4px;
        border: solid #888;
        border-width: 0 1px 1px 0;
        background: #fafafa;
        color: #444;
    }
    </style>
    <span class="grip"></span>
    <div class="acts">
        <tool-button icon="enter" label="Создать объект" pressed></tool-button>
        <tool-button icon="stop" label="Прервать"></tool-button>
        <tool-button icon="hint" label="Справка"></tool-button>
        <svg viewBox="0 0 15 21"><path d="M1 1v15l4-3 3 7 3-1-3-7h6z" fill="#fff" stroke="#333"/></svg>
    </div>
    <div class="main">
        <div class="form">
            <input class="name" type="text" value="Сечение по эскизу:1" aria-label="Наименование">
            <input class="check" type="checkbox" id="src"><label for="src">Использовать цвет <u>и</u>сточника</label>
            <label class="color" for="pick"><u>Ц</u>вет</label>
            <button class="pick" id="pick" type="button"><i></i><span><ui-icon name="drop"></ui-icon></span></button>
            <button class="optic" type="button"><span><u>О</u>птические свойства</span><span>&gt;&gt;</span></button>
        </div>
        <div class="tabs">
            <button type="button"><ui-icon name="section"></ui-icon>Параметры</button>
            <tool-sep></tool-sep>
            <button type="button"><ui-icon name="body"></ui-icon>Результат операции</button>
            <button class="on" type="button"><ui-icon name="form"></ui-icon>Свойства</button>
        </div>
    </div>
`);

define('status-bar', `
    <style>
    :host{
        display: flex;
        flex: none;
        box-sizing: border-box;
        height: 21px;
        background: #eee;
        border-top: 1px solid #dcdcdc;
        line-height: 19px;
    }
    .msg{
        flex: 1;
        padding-left: 6px;
    }
    .cell{
        width: 92px;
        border-left: 1px solid #d0d0d0;
    }
    .size{
        width: 18px;
        border-left: 1px solid #d0d0d0;
        background: radial-gradient(circle, #aaa 1px, transparent 1px) 8px 8px / 4px 4px;
        clip-path: polygon(0 0, 1px 0, 1px 100%, 100% 30%, 100% 100%, 0 100%);
    }
    </style>
    <span class="msg">Создать объект</span><span class="cell"></span><span class="size"></span>
`);

define('cad-window', `
    <style>
    :host{
        display: flex;
        flex-direction: column;
        height: 100%;
        background: linear-gradient(90deg, #dcdcdc, #f4f4f4);
    }
    .row{
        display: flex;
        flex: none;
        height: 28px;
    }
    .c1{ width: 64px; }
    .c2{ width: 91px; }
    .c3{ width: 70px; margin: 0 1px 0 0; }
    .xy{
        box-sizing: border-box;
        width: 51px;
        height: 21px;
        margin-right: 2px;
        padding: 0 4px;
        border: 1px solid #aaa;
        background: #eee;
        font: inherit;
    }
    main{
        display: flex;
        flex: 1;
        min-height: 0;
    }
    </style>
    <menu-bar></menu-bar>
    <div class="row">
        <tool-bar>
            <tool-button icon="doc"></tool-button><tool-button size="narrow" icon="drop"></tool-button>
            <tool-button icon="open"></tool-button><tool-button icon="save"></tool-button><tool-sep></tool-sep>
            <tool-button icon="preview"></tool-button><tool-button icon="manager"></tool-button><tool-sep></tool-sep>
            <tool-button icon="cut"></tool-button><tool-button icon="copy"></tool-button><tool-button icon="paste"></tool-button><tool-sep></tool-sep>
            <tool-button icon="brush"></tool-button><tool-button icon="props"></tool-button><tool-sep></tool-sep>
            <tool-button icon="undo"></tool-button><tool-button icon="redo"></tool-button><tool-button icon="fx"></tool-button><tool-sep></tool-sep>
            <tool-button icon="help"></tool-button>
        </tool-bar>
        <tool-bar>
            <tool-button icon="zoomdoc"></tool-button><tool-sep></tool-sep>
            <tool-button icon="zoomarea"></tool-button><tool-button icon="zoomfit"></tool-button><tool-sep></tool-sep>
            <tool-button icon="zoomin"></tool-button>
            <tool-combo class="c3" value="0.8333" label="Масштаб"></tool-combo><tool-sep></tool-sep>
            <tool-button icon="pan"></tool-button><tool-button icon="orbit"></tool-button>
            <tool-button icon="axes"></tool-button><tool-button size="wide" icon="drop"></tool-button><tool-sep></tool-sep>
            <tool-button icon="wire1"></tool-button><tool-button icon="wire2"></tool-button><tool-button icon="wire3"></tool-button>
            <tool-button icon="shaded" pressed></tool-button><tool-sep></tool-sep>
            <tool-button icon="shadededge" pressed></tool-button><tool-sep></tool-sep>
            <tool-button icon="persp"></tool-button><tool-sep></tool-sep>
            <tool-button icon="orient"></tool-button><tool-button size="wide" icon="drop"></tool-button><tool-sep></tool-sep>
            <tool-button icon="caliper"></tool-button><tool-button icon="rebuild"></tool-button><tool-sep style="visibility: hidden"></tool-sep>
        </tool-bar>
    </div>
    <div class="row">
        <tool-bar>
            <tool-button icon="dimstep"></tool-button>
            <tool-combo class="c1" value="1.0" label="Шаг курсора"></tool-combo><tool-sep></tool-sep>
            <tool-button icon="layers"></tool-button>
            <tool-combo class="c2" label="Слой" off></tool-combo><tool-sep></tool-sep>
            <tool-button icon="sketchgrey"></tool-button><tool-sep></tool-sep>
            <tool-button icon="magnet1"></tool-button><tool-button icon="magnet2"></tool-button><tool-sep></tool-sep>
            <tool-button icon="grid"></tool-button><tool-button size="wide" icon="dropgrey"></tool-button><tool-sep></tool-sep>
            <tool-button icon="lcs1"></tool-button><tool-button icon="lcs2"></tool-button><tool-sep></tool-sep>
            <tool-button icon="ortho"></tool-button><tool-button icon="round" pressed></tool-button><tool-sep></tool-sep>
            <tool-button icon="xy"></tool-button>
            <input class="xy" type="text" aria-label="X" disabled><input class="xy" type="text" aria-label="Y" disabled>
        </tool-bar>
    </div>
    <main>
        <side-bar></side-bar>
        <model-tree></model-tree>
        <model-view></model-view>
    </main>
    <property-panel></property-panel>
    <status-bar></status-bar>
`);

define('part-drawing', `
    <style>
    :host{ display: block; background: #fdfdfd; }
    svg{
        display: block;
        width: 100%;
        font-family: "Open Sans", "Noto Sans", sans-serif;
    }
    </style>
    <svg viewBox="1516 68 404 281" fill="none">
        <defs>
            <marker id="arr" viewBox="0 0 12 6" refX="12" refY="3" markerWidth="12" markerHeight="5" markerUnits="userSpaceOnUse" orient="auto-start-reverse"><path d="M0 0l12 3-12 3z" fill="#222"/></marker>
        </defs>
        <g stroke="#1c1c1c" stroke-width="2">
            <path d="M1592 85H1657V105H1798V136H1832V160H1593Z"/>
            <path d="M1593 172L1833 171V215H1758V200H1705V265H1759V247H1834V290H1596ZM1658 172L1661 290M1799 171L1801 215M1802 247L1803 290"/>
            <circle cx="1625" cy="193" r="10"/><circle cx="1626" cy="268" r="10"/>
            <path stroke-width="3" d="M1526 268h22M1694 232h-14v12M1668 268h12v-11M1889 232h19"/>
        </g>
        <path stroke="#333" stroke-width="1.5" stroke-dasharray="9 4" d="M1613 85L1615 159M1634 85L1636 159M1702 106V159M1756 106V159"/>
        <g stroke="#555" stroke-width="1">
            <path stroke-dasharray="16 3 3 3" d="M1624 75V166"/>
            <path d="M1564 84h28M1567 161h26M1798 103h75M1832 160h43M1832 136h24M1547 172h46M1550 291h46M1568 193h77M1569 268h81M1625 177v34M1626 252v61M1833 216h24M1833 247h24M1758 199h124M1759 266h123"/>
            <path d="M1596 290v59M1661 290v38M1705 265v73M1760 265v60M1803 290v23M1835 290v56M1601 247h54M1602 248l46 38"/>
            <g marker-start="url(#arr)" marker-end="url(#arr)">
                <path d="M1868 104V160"/><path d="M1850 137V160"/><path d="M1573 85L1575 160"/><path d="M1554 173L1557 290"/><path d="M1575 194L1577 268"/><path d="M1851 217V246"/><path d="M1877 200V265"/>
                <path d="M1596 307H1627"/><path d="M1596 320H1661"/><path d="M1596 342H1835"/><path d="M1705 331H1835"/><path d="M1760 319H1835"/><path d="M1803 307H1835"/>
            </g>
            <path marker-end="url(#arr)" d="M1535 306V271"/><path marker-end="url(#arr)" d="M1903 269V235"/>
            <path marker-end="url(#arr)" d="M1604 249L1619 261"/><path marker-end="url(#arr)" d="M1648 286L1634 275"/>
        </g>
        <g fill="#333" font-style="italic" font-size="13" text-anchor="middle">
            <text x="1542" y="96" font-style="normal" font-weight="600">3 а</text>
            <text transform="translate(1570 122) rotate(-90)">35</text>
            <text transform="translate(1865 128) rotate(-90)">25</text>
            <text transform="translate(1847 147) rotate(-90)">10</text>
            <text transform="translate(1552 235) rotate(-90)">55</text>
            <text transform="translate(1573 227) rotate(-90)">35</text>
            <text transform="translate(1849 231) rotate(-90)">15</text>
            <text transform="translate(1874 232) rotate(-90)">30</text>
            <text x="1628" y="245" font-size="11">2отв. ⌀ 10</text>
            <text x="1610" y="304">15</text>
            <text x="1635" y="318">30</text>
            <text x="1685" y="340">110</text>
            <text x="1747" y="328">60</text>
            <text x="1787" y="317">35</text>
            <text x="1820" y="303">15</text>
            <text x="1525" y="299" font-size="17">А</text>
            <text x="1911" y="264" font-size="17">А</text>
            <text x="1868" y="343" font-size="16">Опора</text>
        </g>
        <path d="M1840 349l3-6 3 6" stroke="#333"/>
    </svg>
`);

define('photo-viewer', `
    <style>
    :host{
        display: flex;
        flex-direction: column;
        height: 100%;
        background: #000;
        color: #eee;
        font-family: "Open Sans", "Noto Sans", sans-serif;
        font-size: 12px;
        --icon: 16px;
    }
    header{
        display: flex;
        align-items: center;
        box-sizing: border-box;
        height: 68px;
        padding: 0 8px 29px 5px;
        background: #141414;
    }
    .edit{
        display: flex;
        align-items: center;
        flex: none;
        gap: 6px;
        box-sizing: border-box;
        width: 79px;
        height: 29px;
        padding: 0 0 0 6px;
        border: 0;
        border-radius: 3px;
        background: #6ab2f2;
        font: inherit;
        font-size: 10px;
        color: #16304c;
        --icon: 15px;
    }
    .rot{ margin: 0 14px 0 9px; }
    .name{
        flex: 1;
        text-align: center;
        font-size: 10px;
        font-weight: 600;
        color: #fff;
    }
    .rule{
        width: 1px;
        height: 24px;
        margin: 0 6px;
        background: #333;
    }
    header .rule{ margin: 0 12px 0 10px; }
    .win{
        display: flex;
        gap: 15px;
    }
    footer{
        display: flex;
        align-items: center;
        height: 32px;
        padding: 0 4px;
        margin-top: 29px;
        background: #1c1c1c;
    }
    .under{
        display: flow-root;
        background: #141414;
    }
    .space{ flex: 1; }
    .gap{ width: 10px; }
    .zoom{
        display: flex;
        align-items: center;
        width: 66px;
        height: 26px;
        margin: 0 5px 0 6px;
        border-radius: 3px;
        background: #262626;
        --icon: 12px;
    }
    .zoom select{
        appearance: none;
        flex: 1;
        min-width: 0;
        padding: 0 0 0 10px;
        border: 0;
        background: none;
        font: inherit;
        font-size: 11px;
        color: #eee;
    }
    .zoom ui-icon{ margin-right: 11px; }
    </style>
    <header>
        <button class="edit" type="button"><ui-icon name="edit"></ui-icon>Изменить</button>
        <tool-button class="rot" icon="rotate" label="Повернуть"></tool-button>
        <tool-button icon="dots" label="Ещё"></tool-button>
        <span class="name">3a.PNG</span>
        <tool-button icon="dots" label="Меню"></tool-button>
        <span class="rule"></span>
        <div class="win">
            <tool-button icon="wmin" label="Свернуть"></tool-button>
            <tool-button icon="wmax" label="Развернуть"></tool-button>
            <tool-button icon="wclose" label="Закрыть"></tool-button>
        </div>
    </header>
    <part-drawing></part-drawing>
    <div class="under">
        <footer>
            <tool-button icon="film"></tool-button><span class="rule"></span>
            <tool-button icon="heart"></tool-button><span class="gap"></span><tool-button icon="info"></tool-button>
            <span class="space"></span>
            <tool-button icon="scan"></tool-button>
            <span class="space"></span>
            <tool-button icon="fit"></tool-button>
            <span class="zoom"><select aria-label="Масштаб"><option>46 %</option></select><ui-icon name="chevron"></ui-icon></span>
            <tool-button icon="minus"></tool-button><span class="gap"></span><tool-button icon="plus"></tool-button>
            <span class="rule"></span>
            <tool-button icon="expand"></tool-button>
        </footer>
    </div>
`);

define('desk-top', `
    <style>
    :host{
        display: grid;
        grid-template-columns: 1fr 404px;
        column-gap: 2px;
        height: 100vh;
        background: #000;
    }
    ::slotted(*){ min-width: 0; }
    </style>
    <slot name="main"></slot>
    <slot name="side"></slot>
`);
</script>
</body>
</html>
